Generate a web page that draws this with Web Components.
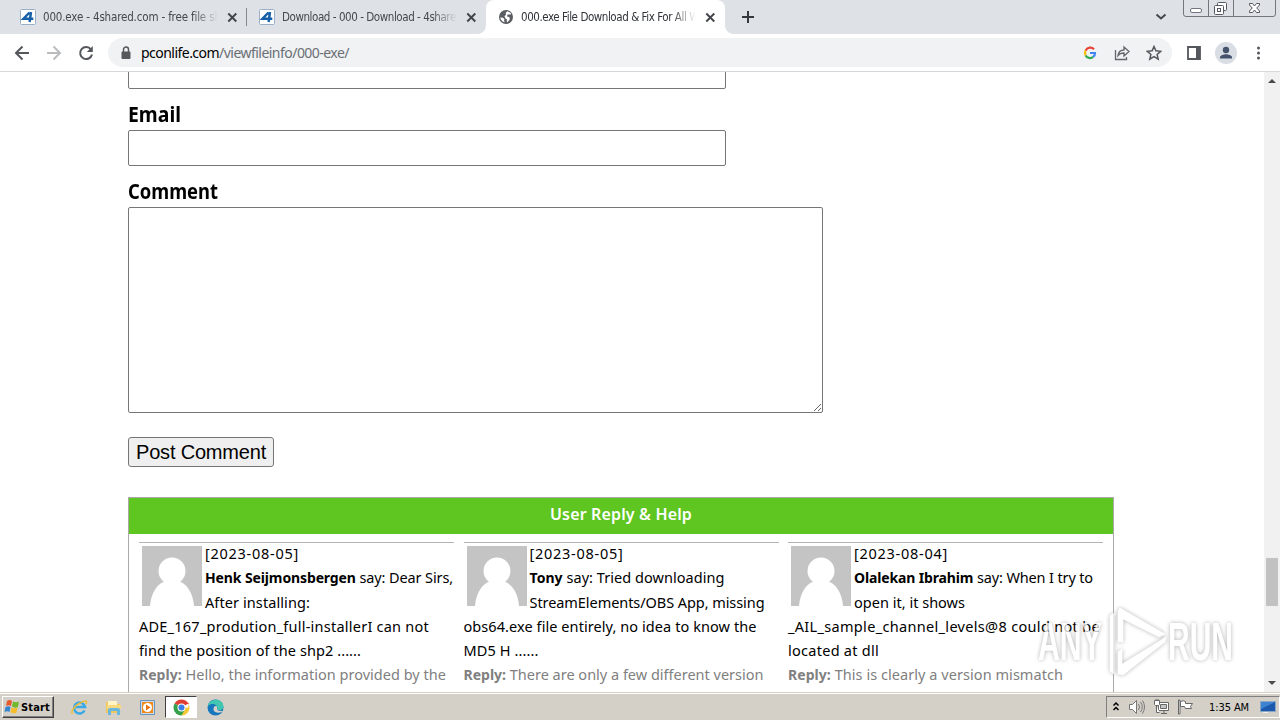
<!DOCTYPE html>
<html lang="en">
<head>
<meta charset="utf-8">
<title>000.exe File Download</title>
<style>
    body {
        background: white;
        color: black;
        display: flex;
        flex-direction: column;
        font-family: "Noto Sans", sans-serif;
        height: 720px;
        margin: 0;
        overflow: hidden;
        width: 1280px;
    }

    reply-card b {
        font-size: 14px;
    }
</style>
</head>
<body>
<browser-tabs>
    <browser-tab icon="four"><fit-text width="184">000.exe - 4shared.com - free file sha</fit-text></browser-tab>
    <browser-tab icon="four"><fit-text width="180">Download - 000 - Download - 4shared</fit-text></browser-tab>
    <browser-tab icon="globe" active><fit-text width="178">000.exe File Download &amp; Fix For All W</fit-text></browser-tab>
</browser-tabs>
<browser-toolbar>
    <fit-text width="208">pconlife.com<span style="color:#6b6f74">/viewfileinfo/000-exe/</span></fit-text>
</browser-toolbar>
<page-view>
    <comment-form></comment-form>
    <reply-panel>
        <fit-text slot="title" width="142">User Reply &amp; Help</fit-text>
        <reply-card>
            <fit-text width="94">[2023-08-05]</fit-text>
            <fit-text width="248"><b>Henk Seijmonsbergen</b> say: Dear Sirs,</fit-text>
            <fit-text width="105">After installing:</fit-text>
            <fit-text width="290">ADE_167_prodution_full-installerI can not</fit-text>
            <fit-text width="222">find the position of the shp2 ......</fit-text>
            <fit-text width="307" slot="reply"><b>Reply:</b> Hello, the information provided by the</fit-text>
        </reply-card>
        <reply-card>
            <fit-text width="94">[2023-08-05]</fit-text>
            <fit-text width="195"><b>Tony</b> say: Tried downloading</fit-text>
            <fit-text width="235">StreamElements/OBS App, missing</fit-text>
            <fit-text width="293">obs64.exe file entirely, no idea to know the</fit-text>
            <fit-text width="75">MD5 H ......</fit-text>
            <fit-text width="300" slot="reply"><b>Reply:</b> There are only a few different version</fit-text>
        </reply-card>
        <reply-card>
            <fit-text width="94">[2023-08-04]</fit-text>
            <fit-text width="239"><b>Olalekan Ibrahim</b> say: When I try to</fit-text>
            <fit-text width="111">open it, it shows</fit-text>
            <fit-text width="312">_AIL_sample_channel_levels@8 could not be</fit-text>
            <fit-text width="91">located at dll</fit-text>
            <fit-text width="275" slot="reply"><b>Reply:</b> This is clearly a version mismatch</fit-text>
        </reply-card>
    </reply-panel>
    <water-mark></water-mark>
</page-view>
<task-bar></task-bar>

<script>
function attach(element, html) {
    element.attachShadow({ mode: 'open' }).innerHTML = html;
}

// One line of text that fills the given width: tracked, or narrowed with "squeeze"
class FitText extends HTMLElement {
    constructor() {
        super();
        attach(this, `
            <style>
                :host {
                    display: block;
                    white-space: nowrap;
                }

                :host([squeeze]) span {
                    display: inline-block;
                    transform-origin: 0 50%;
                }
            </style>
            <span><slot></slot></span>
        `);
    }

    connectedCallback() {
        const span = this.shadowRoot.querySelector('span');
        const count = this.textContent.length;
        const natural = span.getBoundingClientRect().width;
        const width = Number(this.getAttribute('width'));
        if (!natural || !width) {
            return;
        }
        if (this.hasAttribute('squeeze')) {
            span.style.transform = `scaleX(${width / natural})`;
        } else {
            span.style.letterSpacing = (width - natural) / count + 'px';
        }
    }
}

const icons = {
    four: `<svg width="16" height="16" viewBox="0 0 16 16">
        <rect x=".5" y=".5" width="15" height="15" rx="1" fill="#fff" stroke="#9bb0c6"/>
        <path d="M9.5 3.5 3.5 9.7h9.8M11 3 9.6 13" fill="none" stroke="#1560a8" stroke-width="2.5"/>
    </svg>`,
    globe: `<svg width="16" height="16" viewBox="0 0 16 16">
        <circle cx="8" cy="8" r="7" fill="#5a5d61"/>
        <path d="M9.500 2.200 12.800 4q.5 1.500-1 1.500H9.500L9 7.500l2.200.5q1 1.500.3 3L9 13.500q-.5-1.500 0-3L7.500 9.500l-1-2L8 5.500l-.3-1.800z" fill="#fff"/>
        <path d="M2.200 8.500 5 8.800l1.500 1.400-.5 1.300.8 1.800Q3 12.500 2.200 8.500z" fill="#fff"/>
    </svg>`
};

class BrowserTab extends HTMLElement {
    constructor() {
        super();
        attach(this, `
            <style>
                :host {
                    align-items: center;
                    box-sizing: border-box;
                    color: #45484d;
                    display: flex;
                    font: 11.5px "DejaVu Sans Condensed", "Noto Sans", sans-serif;
                    height: 34px;
                    padding: 0 9px 0 12px;
                    position: relative;
                    width: 239px;
                }

                :host([active]) {
                    background: white;
                    border-radius: 8px 8px 0 0;
                    color: #303338;
                }

                :host([active])::before,
                :host([active])::after {
                    bottom: 0;
                    content: "";
                    height: 8px;
                    position: absolute;
                    width: 8px;
                }

                :host([active])::before {
                    background: radial-gradient(circle at 0 0, transparent 7.5px, white 8px);
                    left: -8px;
                }

                :host([active])::after {
                    background: radial-gradient(circle at 100% 0, transparent 7.5px, white 8px);
                    right: -8px;
                }

                #label {
                    flex: 1;
                    margin: 0 8px 0 7px;
                    overflow: hidden;
                    -webkit-mask: linear-gradient(to right, #000 150px, transparent 175px);
                    mask: linear-gradient(to right, #000 150px, transparent 175px);
                }

                svg {
                    flex: none;
                }
            </style>
            ${icons[this.getAttribute('icon')]}
            <div id="label"><slot></slot></div>
            <svg width="11" height="11" viewBox="0 0 11 11"><path d="m1.300 1.500 8 8m0-8-8 8" stroke="#414449" stroke-width="1.9"/></svg>
        `);
    }
}

class BrowserTabs extends HTMLElement {
    constructor() {
        super();
        attach(this, `
            <style>
                :host {
                    background: #dee1e6;
                    box-sizing: border-box;
                    display: flex;
                    flex: none;
                    height: 34px;
                    padding-left: 8px;
                }

                ::slotted(browser-tab:first-child) {
                    background: linear-gradient(#85888d, #85888d) right 0 top 8px / 1px 18px no-repeat;
                }

                #add {
                    margin: 10px 0 0 16px;
                }

                #down {
                    margin: 12px 16px 0 auto;
                }

                #caption {
                    margin-right: 4px;
                }
            </style>
            <slot></slot>
            <svg id="add" width="14" height="14" viewBox="0 0 14 14"><path d="M7 1v12M1 7h12" stroke="#35383c" stroke-width="2"/></svg>
            <svg id="down" width="12" height="10" viewBox="0 0 12 10"><path d="m1.5 2.5 4.5 4 4.5-4" fill="none" stroke="#45484d" stroke-width="2"/></svg>
            <svg id="caption" width="93" height="18" viewBox="0 0 93 18" fill="none" stroke="#72777e">
                <path d="M.5 0v14q0 2.500 2.500 2.500h87q2.500 0 2.500-2.500V0M25.500 0v16.500M50.500 0v16.500"/>
                <rect x="7.500" y="8.500" width="11" height="4" rx="1.500" fill="#fff"/>
                <g fill="#fff" stroke="#555a61">
                    <rect x="34.500" y="2.500" width="9" height="8" rx="1"/>
                    <rect x="31.500" y="5.500" width="9" height="9" rx="1"/>
                    <rect x="34.500" y="8.500" width="3" height="3"/>
                    <path d="M66.500 3.500h3l2 2.500 2-2.500h3v1.500L73.700 8l2.800 3v1.500h-3l-2-2.500-2 2.500h-3V11l2.800-3-2.800-3z"/>
                </g>
            </svg>
        `);
    }
}

class BrowserToolbar extends HTMLElement {
    constructor() {
        super();
        attach(this, `
            <style>
                :host {
                    align-items: center;
                    background: white;
                    border-bottom: 1px solid #d5d7da;
                    box-sizing: border-box;
                    display: flex;
                    flex: none;
                    height: 38px;
                    padding: 0 12px 0 14px;
                }

                svg {
                    display: block;
                    flex: none;
                }

                #nav {
                    display: flex;
                    gap: 16px;
                    margin-right: 14px;
                }

                #address {
                    align-items: center;
                    background: #f0f2f4;
                    border-radius: 15px;
                    box-sizing: border-box;
                    display: flex;
                    flex: 1;
                    font-size: 14px;
                    gap: 16px;
                    height: 29px;
                    margin-right: 14px;
                    padding: 0 10px 0 12px;
                }

                #address slot {
                    display: block;
                    flex: 1;
                    margin: -1px 0 0 -7px;
                }

                #actions {
                    align-items: center;
                    display: flex;
                    gap: 13px;
                }
            </style>
            <div id="nav">
                <svg width="16" height="16" viewBox="0 0 16 16"><path d="M15 8H2m6.500-6.500L2 8l6.500 6.500" fill="none" stroke="#54575c" stroke-width="2"/></svg>
                <svg width="16" height="16" viewBox="0 0 16 16"><path d="M1 8h13M7.500 1.500 14 8l-6.500 6.500" fill="none" stroke="#babcbe" stroke-width="2"/></svg>
                <svg width="16" height="16" viewBox="0 0 16 16"><path d="M13 4.500A6 6 0 1 0 14 9.500" fill="none" stroke="#54575c" stroke-width="2"/><path d="M14.800 1v6H8.800z" fill="#54575c"/></svg>
            </div>
            <div id="address">
                <svg width="12" height="14" viewBox="0 0 12 14"><rect x="1.500" y="5.500" width="9" height="7.500" rx="1" fill="#54575c"/><path d="M3.500 6V3.500a2.500 2.500 0 0 1 5 0V6" fill="none" stroke="#54575c" stroke-width="1.500"/></svg>
                <slot></slot>
                <svg width="16" height="16" viewBox="0 0 16 16" fill="none" stroke-width="2.200">
                    <path d="M12 4.300A5 5 0 0 0 3.600 5.600" stroke="#ea4335"/>
                    <path d="M3.600 5.600a5 5 0 0 0 0 4.800" stroke="#fbbc05"/>
                    <path d="M3.600 10.400a5 5 0 0 0 7.600 1.500" stroke="#34a853"/>
                    <path d="M11.200 11.900A5 5 0 0 0 13 8H8" stroke="#4285f4"/>
                </svg>
                <svg width="16" height="16" viewBox="0 0 16 16" fill="none" stroke="#62656a" stroke-width="1.300"><path d="M1.500 5v9.500h11V12"/><path d="M4 10.500c.5-4 2.500-5.500 6-5.500V2l5 4.500-5 4.500V8c-3 0-4.500.5-6 2.500z"/></svg>
                <svg width="16" height="16" viewBox="0 0 16 16"><path d="m8 1.500 1.900 4.300 4.800.5-3.600 3.200 1.100 4.700L8 11.700l-4.200 2.500 1.100-4.700-3.600-3.200 4.800-.5z" fill="none" stroke="#54575c" stroke-width="1.500"/></svg>
            </div>
            <div id="actions">
                <svg width="16" height="16" viewBox="0 0 16 16"><path d="M2 2h12v12H2z" fill="none" stroke="#54575c" stroke-width="1.800"/><path d="M10 2h4v12h-4z" fill="#54575c"/></svg>
                <svg width="22" height="22" viewBox="0 0 22 22"><circle cx="11" cy="11" r="11" fill="#d9dde4"/><circle cx="11" cy="8" r="3.200" fill="#46536c"/><path d="M5 16.500v-1.300c0-2 4-3 6-3s6 1 6 3v1.300z" fill="#46536c"/></svg>
                <svg width="18" height="16" viewBox="0 0 18 16" fill="#54575c"><circle cx="8.500" cy="3" r="1.500"/><circle cx="8.500" cy="8" r="1.500"/><circle cx="8.500" cy="13" r="1.500"/></svg>
            </div>
        `);
    }
}

class PageView extends HTMLElement {
    constructor() {
        super();
        attach(this, `
            <style>
                :host {
                    display: flex;
                    flex: none;
                    height: 620px;
                    overflow: hidden;
                    position: relative;
                }

                main {
                    flex: 1;
                    padding-left: 128px;
                }

                #scroll {
                    align-items: center;
                    background: #f1f1f1;
                    display: flex;
                    flex-direction: column;
                    width: 16px;
                }

                #scroll div {
                    background: #c1c1c1;
                    height: 48px;
                    margin: 473px 0 auto;
                    width: 12px;
                }
            </style>
            <main><slot></slot></main>
            <div id="scroll">
                <svg width="16" height="13"><path d="m4 11 4-4 4 4z" fill="#4b4b4b"/></svg>
                <div></div>
                <svg width="16" height="15"><path d="m4 4 4 4 4-4z" fill="#4b4b4b"/></svg>
            </div>
        `);
    }
}

class CommentForm extends HTMLElement {
    constructor() {
        super();
        attach(this, `
            <style>
                :host {
                    display: block;
                }

                label {
                    display: block;
                    font-size: 21.5px;
                    font-weight: bold;
                    height: 41px;
                    line-height: 50px;
                }

                input,
                textarea {
                    background: white;
                    border: 1px solid #767676;
                    border-radius: 2px;
                    box-sizing: border-box;
                    display: block;
                    height: 36px;
                    margin: 0;
                    width: 598px;
                }

                #name {
                    margin-top: -19px;
                }

                textarea {
                    height: 206px;
                    width: 695px;
                }

                button {
                    background: #efefef;
                    border: 1px solid #767676;
                    border-radius: 3px;
                    color: black;
                    display: block;
                    font: 20px "Liberation Sans", sans-serif;
                    height: 30px;
                    margin: 24px 0 30px;
                    padding: 0 0 0 7px;
                    text-align: left;
                    width: 146px;
                }
            </style>
            <input id="name">
            <label><fit-text squeeze width="53">Email</fit-text></label>
            <input>
            <label><fit-text squeeze width="90">Comment</fit-text></label>
            <textarea></textarea>
            <button><fit-text width="130">Post Comment</fit-text></button>
        `);
    }
}

class ReplyPanel extends HTMLElement {
    constructor() {
        super();
        attach(this, `
            <style>
                :host {
                    border: 1px solid #aaa;
                    box-sizing: border-box;
                    display: block;
                    height: 240px;
                    width: 986px;
                }

                header {
                    background: #5fc521;
                    color: white;
                    display: flex;
                    font-size: 16px;
                    font-weight: 600;
                    height: 36px;
                    justify-content: center;
                    line-height: 32px;
                }

                section {
                    display: grid;
                    gap: 9.5px;
                    grid-template-columns: repeat(3, 315px);
                    padding: 8px 10px;
                }
            </style>
            <header><slot name="title"></slot></header>
            <section><slot></slot></section>
        `);
    }
}

class ReplyCard extends HTMLElement {
    constructor() {
        super();
        attach(this, `
            <style>
                :host {
                    border-top: 1px solid #b4b4b4;
                    display: block;
                    font-size: 14.5px;
                    line-height: 24px;
                }

                svg {
                    background: #c4c4c4;
                    float: left;
                    margin: 3px;
                }

                #text {
                    margin-top: -2px;
                }

                #reply {
                    color: #808080;
                }
            </style>
            <svg width="60" height="60" viewBox="0 0 60 60" fill="#fff"><circle cx="30" cy="25" r="13.500"/><path d="M8 60c1-14 8-23 16-25h12c8 2 15 11 16 25z"/></svg>
            <div id="text"><slot></slot></div>
            <div id="reply"><slot name="reply"></slot></div>
        `);
    }
}

class WaterMark extends HTMLElement {
    constructor() {
        super();
        attach(this, `
            <style>
                :host {
                    left: 1030px;
                    opacity: 0.75;
                    pointer-events: none;
                    position: absolute;
                    top: 530px;
                }

                svg {
                    display: block;
                    filter: drop-shadow(0 0 2px rgba(0, 0, 0, 0.4));
                    font: bold 53px "Liberation Sans Narrow", "Liberation Sans", sans-serif;
                }
            </style>
            <svg width="234" height="85" viewBox="0 0 234 85" fill="#fff">
                <text transform="translate(8 58) scale(.57 1)" textLength="112" lengthAdjust="spacingAndGlyphs">ANY</text>
                <path d="M80 14v55l4 3V11zM88 9v31h5V17l36 18 6-3L90 6zM136 35 92 62v-15l-4 3v22l5 1 42-33z" stroke="#fff" stroke-opacity=".6"/>
                <text transform="translate(138 58) scale(.57 1)" textLength="114" lengthAdjust="spacingAndGlyphs">RUN</text>
            </svg>
        `);
    }
}

class TaskBar extends HTMLElement {
    constructor() {
        super();
        attach(this, `
            <style>
                :host {
                    align-items: center;
                    background: #d4d0c8;
                    border-top: 1px solid #d4d0c8;
                    box-shadow: inset 0 1px white;
                    box-sizing: border-box;
                    display: flex;
                    flex: none;
                    font: 11px "DejaVu Sans Condensed", sans-serif;
                    height: 28px;
                    padding: 1px 0 0 2px;
                }

                #start {
                    align-items: center;
                    border: 1px solid;
                    border-color: white #404040 #404040 white;
                    box-shadow: inset -1px -1px #808080;
                    box-sizing: border-box;
                    display: flex;
                    font-weight: bold;
                    height: 22px;
                    padding-left: 1px;
                    width: 52px;
                }

                #apps {
                    display: flex;
                    gap: 2px;
                    margin-left: 9px;
                }

                #apps div {
                    align-items: center;
                    border: 1px solid transparent;
                    box-sizing: border-box;
                    display: flex;
                    height: 22px;
                    justify-content: center;
                    width: 32px;
                }

                #apps .open {
                    background: white;
                    border-color: #404040 white white #404040;
                }

                #tray {
                    align-items: center;
                    border: 1px solid;
                    border-color: #808080 white white #808080;
                    box-sizing: border-box;
                    display: flex;
                    height: 22px;
                    margin-left: auto;
                    padding-left: 4px;
                    width: 174px;
                }

                #tray svg {
                    flex: none;
                }
            </style>
            <div id="start">
                <svg width="17" height="16" viewBox="0 0 17 16">
                    <path d="M3 2q3-2 5 0L7 7Q4 5.500 2 7z" fill="#e75a2d"/>
                    <path d="M9 2.500q3 1.500 6 0L14 8q-3 1.500-6-.5z" fill="#73b72b"/>
                    <path d="M1.500 8q3-1.500 5 0l-1 5q-2-1.500-5 0z" fill="#3485cf"/>
                    <path d="M7.500 8.500q3 1.500 6 .2l-1 5q-3 1.500-6-.5z" fill="#f7bd28"/>
                </svg>
                <fit-text width="29">Start</fit-text>
            </div>
            <div id="apps">
                <div><svg width="17" height="17" viewBox="0 0 17 17" fill="none">
                    <path d="M13.500 11.500A5.500 5.500 0 1 1 14 8H4" stroke="#3ba9e5" stroke-width="2.600"/>
                    <path d="M2 14C-1 15 2 8 8 4.500S17 1 15 5" stroke="#edbd3c" stroke-width="1.500"/>
                </svg></div>
                <div><svg width="17" height="17" viewBox="0 0 17 17">
                    <path d="M1 3h6l1 2h7v9H1z" fill="#efc95d"/><path d="M3 2h9v5H3z" fill="#fff4c4"/><path d="M2 6h14v4H2z" fill="#f5da82"/><path d="M3 16v-5q0-2 2-2h8q2 0 2 2v5h-3v-4H6v4z" fill="#69b7dc"/>
                </svg></div>
                <div><svg width="17" height="17" viewBox="0 0 17 17">
                    <path d="M1.500 1.500h14v14h-14z" fill="#c9ddec" stroke="#6994b9"/><path d="M3 3h11v11H3z" fill="#f18a1c"/><circle cx="8.500" cy="8.500" r="4.500" fill="#fff"/><path d="m7 5.500 4.500 3L7 11.500z" fill="#e87410"/>
                </svg></div>
                <div class="open"><svg width="17" height="17" viewBox="0 0 17 17">
                    <path d="M8.500 8.500 1.600 4.500a8 8 0 0 1 13.800 0z" fill="#e13d32"/><path d="M8.500 8.500h6.900V4.500a8 8 0 0 1-6.900 12z" fill="#f8c934"/><path d="m8.500 8.500-6.900-4a8 8 0 0 0 6.900 12l3.400-6z" fill="#35a14c"/><path d="M4 4.500h11.400z" stroke="#e13d32"/><circle cx="8.500" cy="8.500" r="4" fill="#fff"/><circle cx="8.500" cy="8.500" r="3" fill="#3c7ee8"/>
                </svg></div>
                <div><svg width="17" height="17" viewBox="0 0 17 17">
                    <circle cx="8.500" cy="8.500" r="8" fill="#1676be"/><path d="M.8 7C2-1 16-2 16.500 7.500c0 4-5 4.500-6.500 2.500 2-3-4-8-9.200-3z" fill="#42c6b0"/><path d="M7 8c-2 4 2 7 8 5l1-1c-3 0-6 0-6-3 1-2-2-3-3-1z" fill="#d4d0c8"/>
                </svg></div>
            </div>
            <div id="tray">
                <svg width="10" height="12" viewBox="0 0 10 12"><path d="m2.500 4.500 2.500-2.500 2.500 2.500M2.500 9l2.500-2.500L7.500 9" fill="none" stroke="#000" stroke-width="1.500"/></svg>
                <svg style="margin-left:7px" width="18" height="16" viewBox="0 0 18 16" fill="#fff" stroke="#777"><path d="M1.500 5.500h3l4-4v13l-4-4h-3z"/><path d="M10.500 5q2 3 0 6M12.500 3q3.500 5 0 10M14.500 1.500q4 6.500 0 13" fill="none"/></svg>
                <svg style="margin-left:7px" width="17" height="16" viewBox="0 0 17 16" fill="#fff" stroke="#666"><path d="M5.500 3.500h10v8h-10zM8 14.500h6M11 12v2"/><path d="M7.500 5.500h6v4h-6z" fill="#c4c4c4"/><path d="M1.500 1.500h5v4l-1 1h-3l-1-1zM3.500 6.500v7h3M3 0v2M5 0v2"/></svg>
                <svg style="margin-left:7px" width="17" height="16" viewBox="0 0 17 16" fill="#fff" stroke="#666"><path d="M1.500 1v14h1.500V1zM3.500 2.500q3-1.500 5 0v2h7l-2 3 1 2h-6l-1-2h-4z"/></svg>
                <fit-text style="margin-left:15px" width="40">1:35 AM</fit-text>
                <svg style="margin-left:11px" width="16" height="14" viewBox="0 0 16 14"><path d="M.5 1.500h15v10H.5z" fill="#1c59ac" stroke="#8ca7c4"/><path d="M1 2h14L1 9z" fill="#3d83d2"/><path d="M3 12.500h5" stroke="#eee"/></svg>
            </div>
        `);
    }
}

customElements.define('browser-tab', BrowserTab);
customElements.define('browser-tabs', BrowserTabs);
customElements.define('browser-toolbar', BrowserToolbar);
customElements.define('page-view', PageView);
customElements.define('comment-form', CommentForm);
customElements.define('reply-panel', ReplyPanel);
customElements.define('reply-card', ReplyCard);
customElements.define('water-mark', WaterMark);
customElements.define('task-bar', TaskBar);
customElements.define('fit-text', FitText);
</script>
</body>
</html>
